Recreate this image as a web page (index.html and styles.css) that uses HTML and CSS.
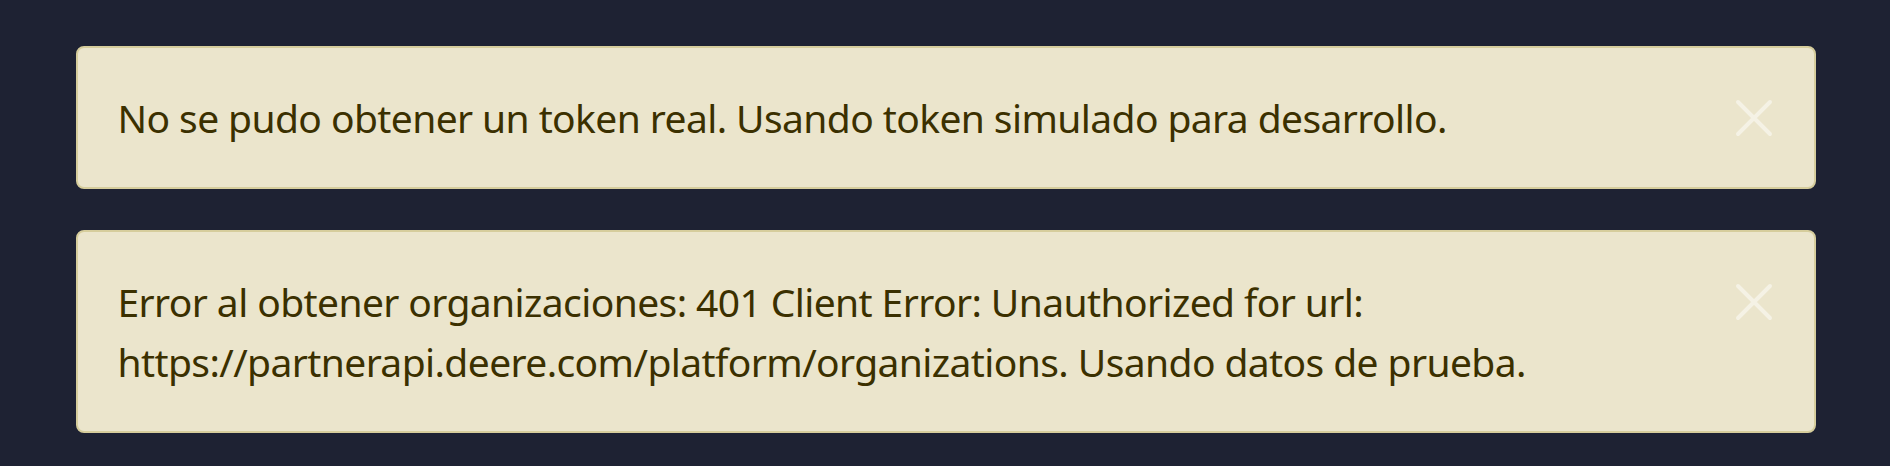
FILE: index.html
```html
<!DOCTYPE html>
<html lang="es">
<head>
<meta charset="utf-8">
<title>Alertas</title>
<link rel="stylesheet" href="styles.css">
</head>
<body>
<main class="page">
  <div class="alert" role="alert">
    <p class="alert-text">No se pudo obtener un token real. Usando token simulado para desarrollo.</p>
    <button class="alert-close" aria-label="Cerrar">
      <svg viewBox="0 0 40 40" width="40" height="40"><path d="M4 4 L36 36 M36 4 L4 36"/></svg>
    </button>
  </div>
  <div class="alert" role="alert">
    <p class="alert-text">Error al obtener organizaciones: 401 Client Error: Unauthorized for url: https://partnerapi.deere.com/platform/organizations. Usando datos de prueba.</p>
    <button class="alert-close" aria-label="Cerrar">
      <svg viewBox="0 0 40 40" width="40" height="40"><path d="M4 4 L36 36 M36 4 L4 36"/></svg>
    </button>
  </div>
</main>
</body>
</html>
```
FILE: styles.css
```css
html, body {
  margin: 0;
  padding: 0;
  background: #1e2233;
}
body {
  font-family: "Noto Sans", "Open Sans", sans-serif;
}
.page {
  display: flex;
  flex-direction: column;
  gap: 41px;
  padding: 46px 74px 33px 76px;
}
.alert {
  display: flex;
  align-items: flex-start;
  gap: 20px;
  background: #ebe5cc;
  border: 2px solid #d6cd9c;
  border-radius: 8px;
  padding: 39.5px 40px 39.5px 39.5px;
}
.alert-text {
  flex: 1;
  margin: 0;
  font-size: 39px;
  line-height: 60px;
  letter-spacing: -0.6px;
  color: #3b3000;
}
.alert-close {
  flex: none;
  height: 60px;
  width: 40px;
  padding: 0;
  border: 0;
  background: none;
  display: flex;
  align-items: center;
  justify-content: center;
}
.alert-close svg {
  display: block;
  fill: none;
  stroke: #f5f2e5;
  stroke-width: 4;
  stroke-linecap: round;
}
```
